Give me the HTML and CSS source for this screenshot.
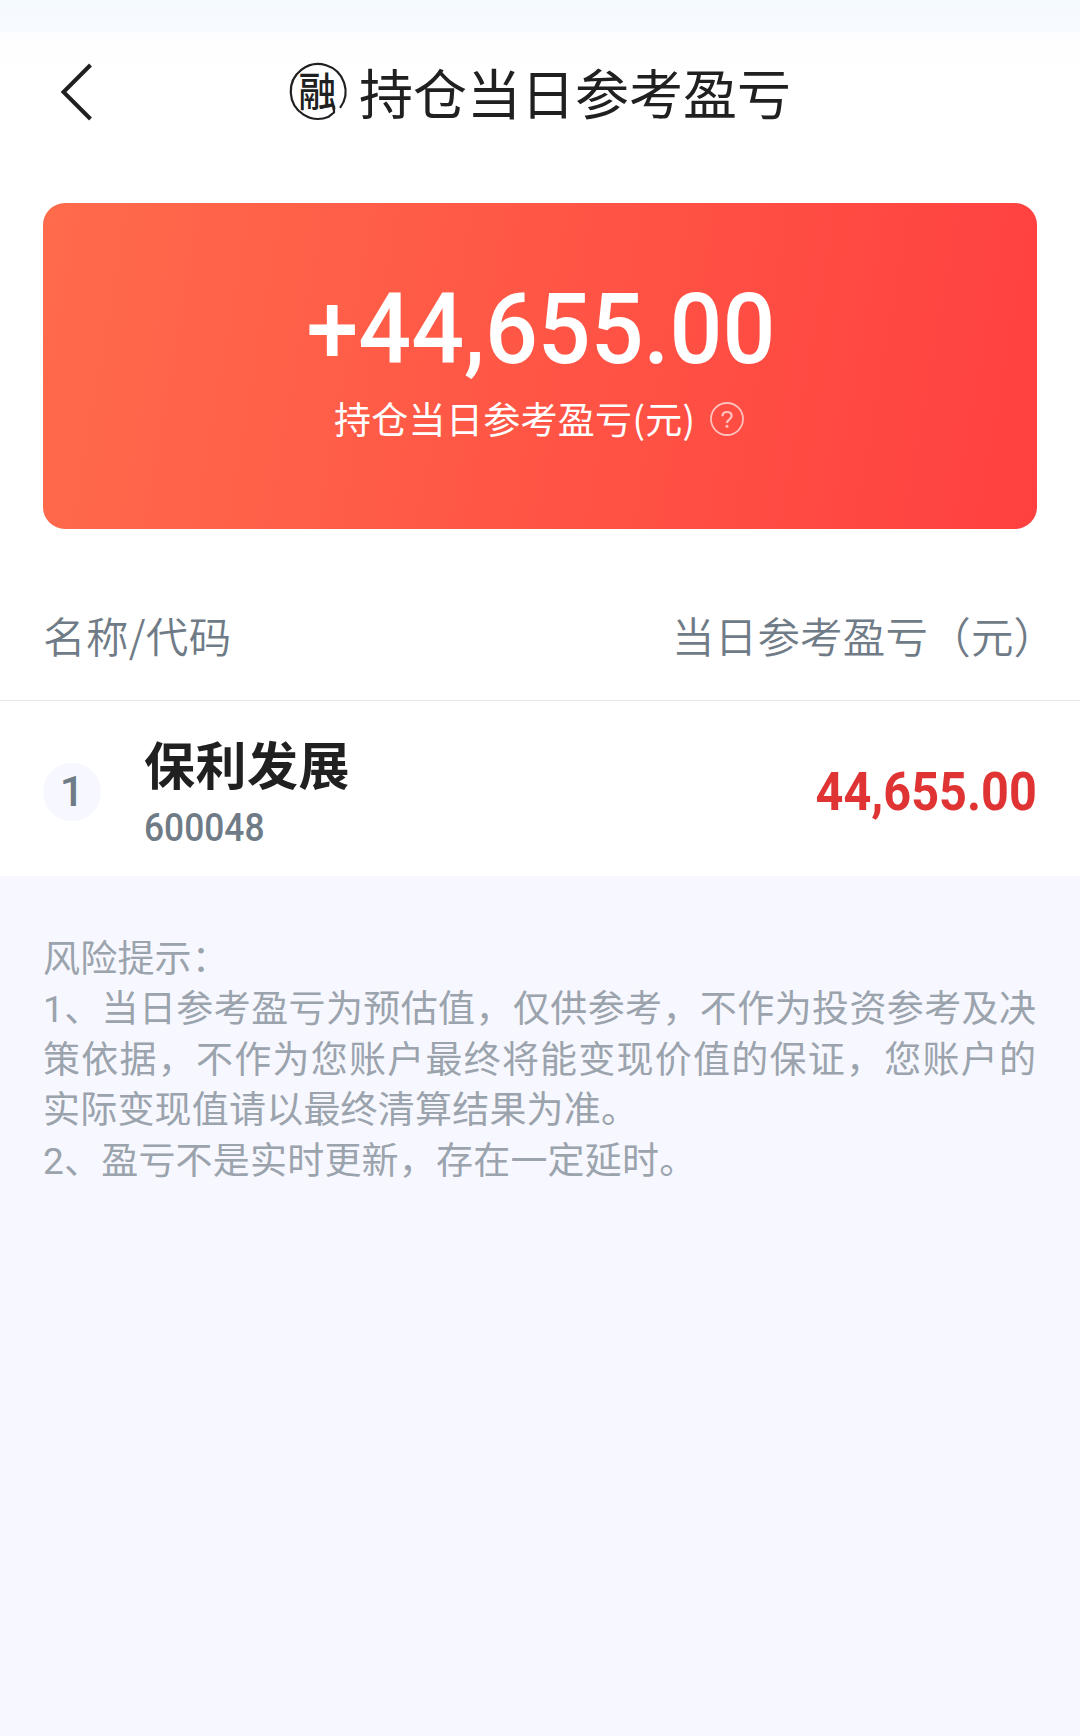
FILE: index.html
```html
<!DOCTYPE html>
<html lang="zh-CN">
<head>
<meta charset="utf-8">
<title>持仓当日参考盈亏</title>
<link rel="stylesheet" href="styles.css">
</head>
<body>
<header class="nav">
  <svg class="back" width="34" height="60" viewBox="0 0 34 60"><path d="M30.500 3 3.500 30 30.500 57" fill="none" stroke="#202020" stroke-width="4"/></svg>
  <h1 class="title">
    <svg class="badge" width="58" height="58" viewBox="0 0 58 58">
      <path d="M52.100 44.800A27.400 27.400 0 1 0 40.700 53.700L46 49.500V43" fill="none" stroke="#202020" stroke-width="2.200" stroke-linejoin="round"/>
      <text class="badge-text" transform="translate(10.500 42.500) scale(.950 1)">融</text>
    </svg>
    <span class="title-text">持仓当日参考盈亏</span>
  </h1>
</header>
<main>
  <section class="card">
    <div class="total">+44,655.00</div>
    <div class="caption">
      <span>持仓当日参考盈亏(元)</span>
      <svg class="help" width="34" height="34" viewBox="0 0 34 34"><circle cx="17" cy="17" r="16" fill="none" stroke="currentColor" stroke-width="1.800"/><path d="M12.500 14.300C12.500 11.500 14.300 10 17 10s4.600 1.600 4.600 4c0 3.300-4.600 3.300-4.600 7" fill="none" stroke="currentColor" stroke-width="2.200"/><circle cx="17" cy="24.300" r="1.500" fill="currentColor"/></svg>
    </div>
  </section>
  <div class="columns"><span class="col-name">名称/代码</span><span class="col-value">当日参考盈亏（元）</span></div>
  <div class="row">
    <span class="rank">1</span>
    <div class="stock"><span class="name">保利发展</span><span class="code">600048</span></div>
    <span class="profit">44,655.00</span>
  </div>
</main>
<footer class="notice">
  <p>风险提示：</p>
  <p class="full">1、当日参考盈亏为预估值，仅供参考，不作为投资参考及决</p>
  <p class="full">策依据，不作为您账户最终将能变现价值的保证，您账户的</p>
  <p>实际变现值请以最终清算结果为准。</p>
  <p>2、盈亏不是实时更新，存在一定延时。</p>
</footer>
</body>
</html>
```
FILE: styles.css
```css
* { box-sizing: border-box; }
body {
  margin: 0;
  min-height: 1736px;
  background: #f7f8ff;
  font-family: Roboto, "Noto Sans CJK SC", sans-serif;
  white-space: nowrap;
}
.nav {
  height: 203px;
  padding: 62px 60px 0;
  display: flex;
  align-items: flex-start;
  background: linear-gradient(#f5faff 0, #f7fbff 30px, #fdfdff 34px, #fff 75px);
}
.back { display: block; }
.title {
  display: flex;
  margin: 1px 0 0 194px;
  font-size: 54px;
  font-weight: 400;
  line-height: 60px;
  color: #202020;
}
.badge { display: block; overflow: visible; }
.badge-text {
  font-family: "Noto Sans CJK SC", sans-serif;
  font-size: 40px;
  font-weight: 500;
  fill: #202020;
}
.title-text { margin-left: 13px; padding-top: 4px; }

main { height: 673px; background: #fff; }
.card {
  height: 326px;
  margin: 0 43px;
  padding-top: 74px;
  border-radius: 22px;
  background: linear-gradient(100deg, #ff6b4b, #ff4040);
  color: #fff;
}
.total {
  height: 104px;
  padding-left: 2px;
  font-size: 98.5px;
  font-weight: 500;
  line-height: 105px;
  text-align: center;
  transform: scaleX(.945);
}
.caption {
  display: flex;
  align-items: center;
  height: 74px;
  padding-left: 291px;
  font: 400 37px/74px "Noto Sans CJK SC", sans-serif;
  letter-spacing: .3px;
}
.help { margin: 2px 0 0 15px; opacity: .65; }

.columns {
  display: flex;
  justify-content: space-between;
  height: 172px;
  padding: 76px 43px 0;
  border-bottom: 1px solid #e8e8ea;
  font: 350 42.5px/60px "Noto Sans CJK SC", sans-serif;
  color: #6f7b86;
}
.col-name { letter-spacing: .4px; }
.col-value { width: 365px; letter-spacing: .2px; }

.row { display: flex; align-items: center; height: 175px; padding: 6px 43px 0; }
.rank {
  width: 58px;
  height: 58px;
  border-radius: 50%;
  background: #f6f7ff;
  color: #6f7b86;
  font-size: 43px;
  font-weight: 500;
  line-height: 57px;
  text-align: center;
}
.stock { display: flex; flex-direction: column; margin-left: 43px; padding-top: 9px; }
.name { font-size: 51px; font-weight: 700; line-height: 64px; letter-spacing: .5px; color: #202020; }
.code {
  font-size: 38px;
  font-weight: 500;
  line-height: 56px;
  color: #6f7b86;
  transform: scaleX(.93);
  transform-origin: left;
}
.profit {
  margin: -1px 0 0 auto;
  font-size: 54px;
  font-weight: 700;
  color: #e03333;
  transform: scaleX(.9);
  transform-origin: right;
}

.notice {
  padding: 58.5px 44px 0 43px;
  font-size: 37px;
  line-height: 50.5px;
  letter-spacing: .2px;
  color: #9ba3ad;
}
.notice p { height: 50.5px; margin: 0; }
.notice .full { letter-spacing: 0; text-align: justify; text-align-last: justify; }
```
